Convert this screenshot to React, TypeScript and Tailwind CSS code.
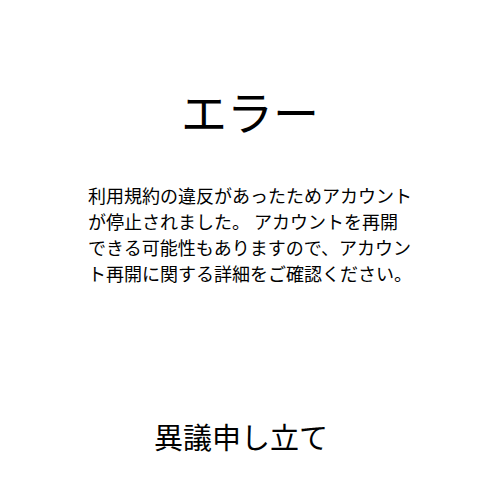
export default function App() {
  return (
    <div
      className="w-[500px] h-[500px] bg-white text-black flex flex-col items-center"
      style={{ fontFamily: '"Noto Sans CJK JP", "Noto Sans", sans-serif' }}
    >
      <h1 className="mt-[83px] text-[46px] leading-[54px] font-normal">エラー</h1>
      <p className="mt-[45px] w-[324px] text-[18px] leading-[26px]">
        利用規約の違反があったためアカウントが停止されました。 アカウントを再開できる可能性もありますので、アカウント再開に関する詳細をご確認ください。
      </p>
      <button className="mt-auto mb-[44px] mr-[18px] text-[29px] leading-[40px]">異議申し立て</button>
    </div>
  );
}
